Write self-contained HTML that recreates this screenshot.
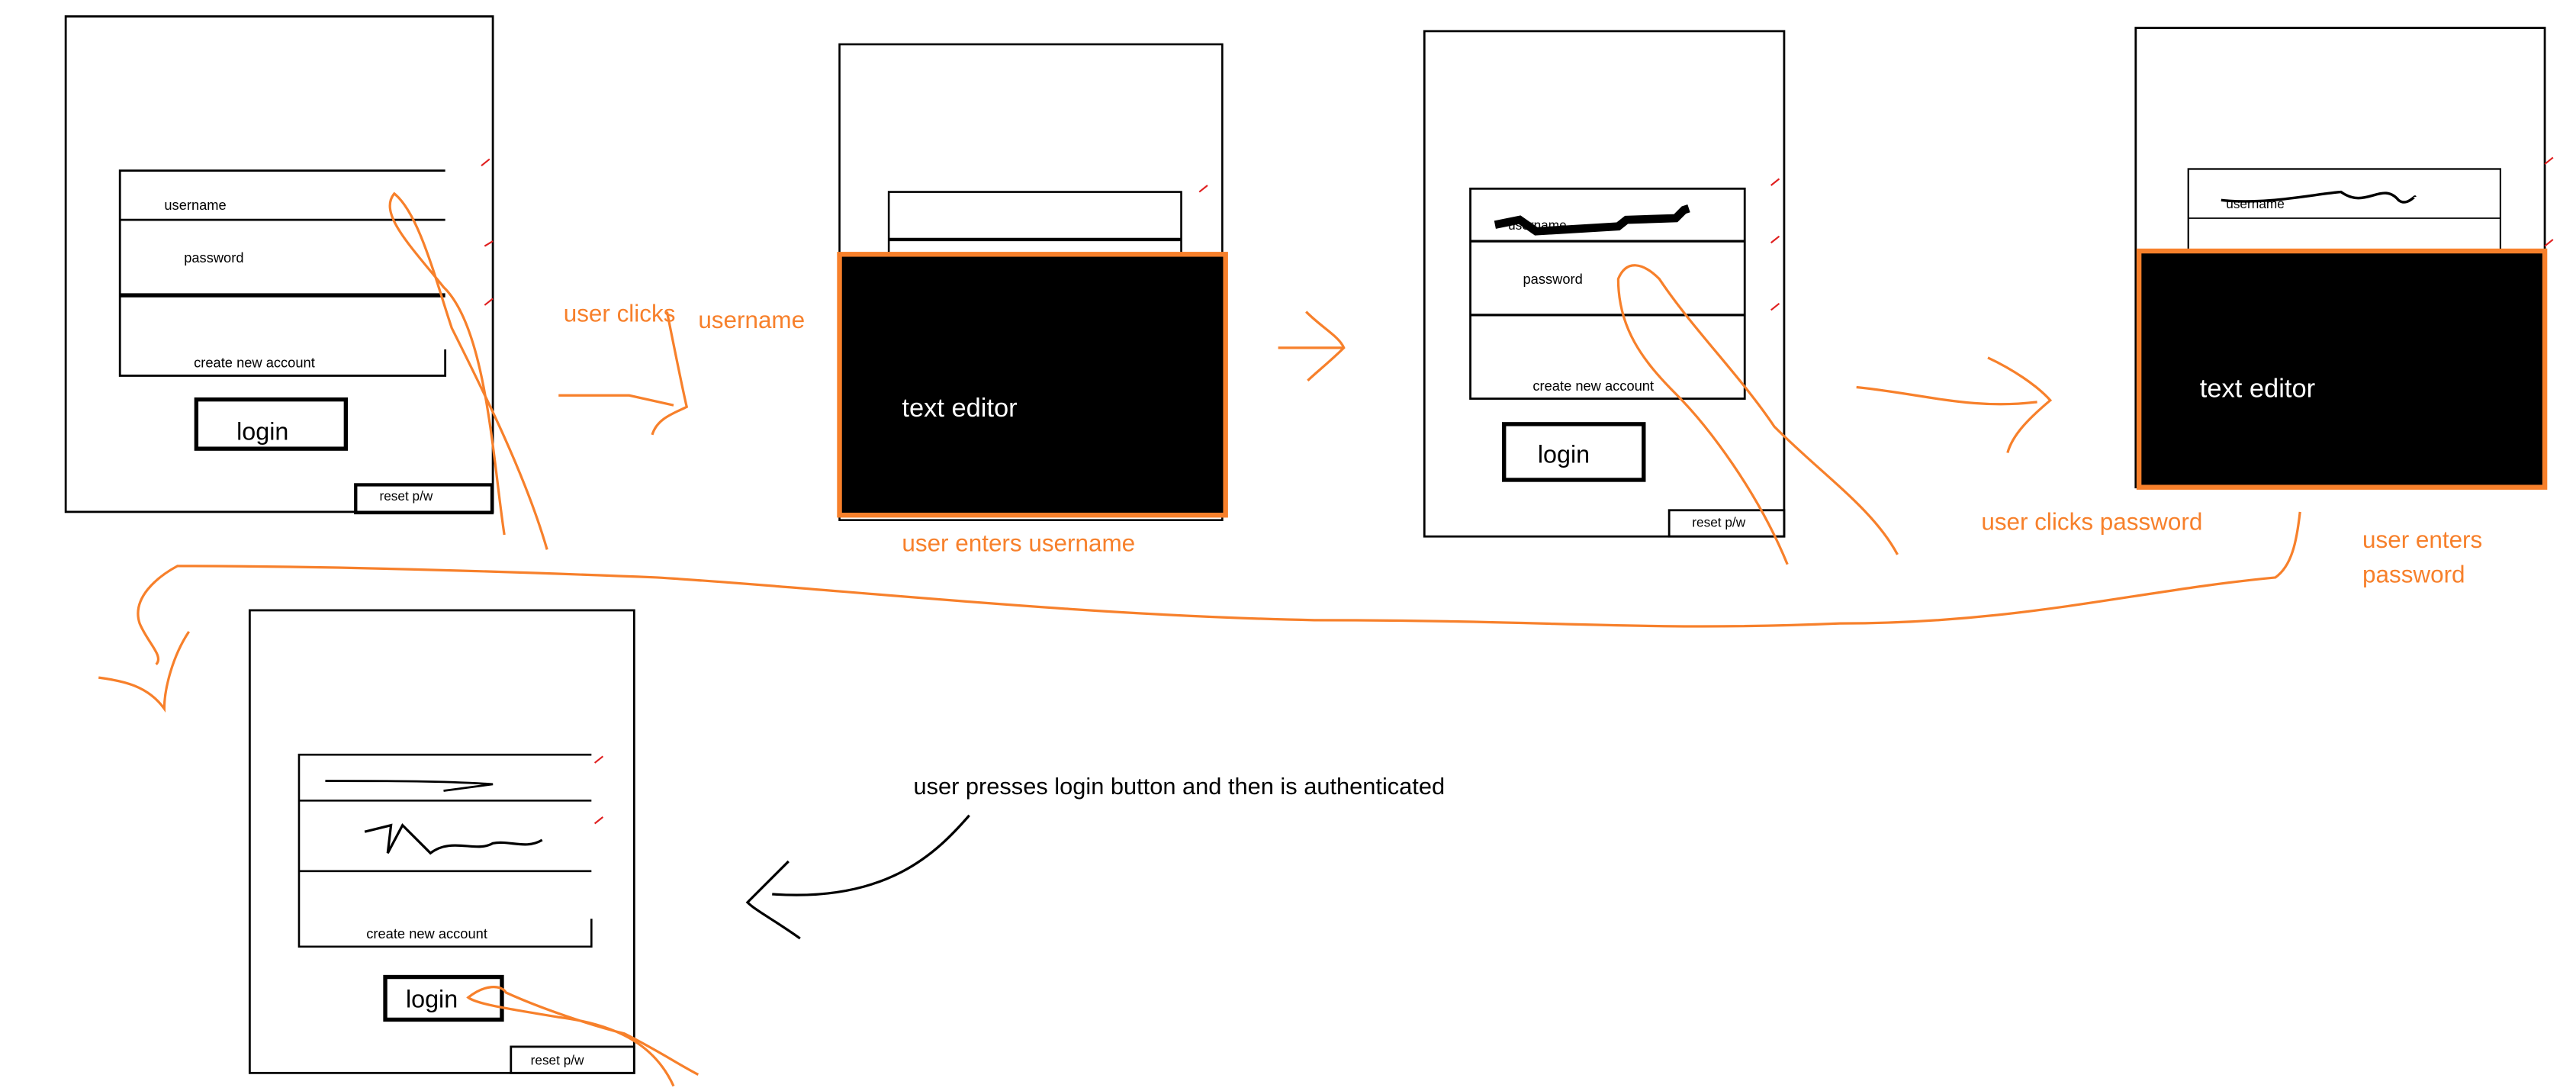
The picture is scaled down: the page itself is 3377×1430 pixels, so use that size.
<!DOCTYPE html>
<html><head><meta charset="utf-8">
<style>
html,body{margin:0;padding:0;background:#fff;}
svg{display:block;}
text{font-family:"Liberation Sans",sans-serif;}
</style></head>
<body>
<svg width="3377" height="1430" viewBox="0 0 1568 665" preserveAspectRatio="none" xmlns="http://www.w3.org/2000/svg">
<rect x="0" y="0" width="1568" height="665" fill="#fff"/>
<g fill="none" stroke="#000">
<rect x="40" y="10" width="260" height="302" stroke-width="1.3"/>
<path d="M271,104 H73 V229 H271 V213" stroke-width="1.3"/>
<line x1="73" y1="134" x2="271" y2="134" stroke-width="1.3"/>
<line x1="73" y1="180" x2="271" y2="180" stroke-width="2.5"/>
<rect x="119.5" y="243.5" width="91" height="30" stroke-width="2.5"/>
<rect x="216.5" y="295.5" width="83" height="17" stroke-width="2"/>
<rect x="511" y="27" width="233" height="290" stroke-width="1.2"/>
<path d="M541,154 V117 H719 V154" stroke-width="1.2"/>
<line x1="541" y1="146" x2="719" y2="146" stroke-width="2"/>
<rect x="867" y="19" width="219" height="308" stroke-width="1.3"/>
<rect x="895" y="115" width="167" height="128" stroke-width="1.3"/>
<line x1="895" y1="147" x2="1062" y2="147" stroke-width="1.5"/>
<line x1="895" y1="192" x2="1062" y2="192" stroke-width="1.5"/>
<rect x="915.5" y="258.5" width="85" height="34" stroke-width="2.5"/>
<rect x="1016" y="311" width="70" height="16" stroke-width="1.3"/>
<rect x="1300" y="17" width="249" height="280" stroke-width="1.3"/>
<path d="M1332,152 V103 H1522 V152" stroke-width="1"/>
<line x1="1332" y1="133" x2="1522" y2="133" stroke-width="0.8"/>
<rect x="152" y="372" width="234" height="282" stroke-width="1.3"/>
<path d="M360,460 H182 V577 H360 V560" stroke-width="1.2"/>
<line x1="182" y1="488" x2="360" y2="488" stroke-width="1.2"/>
<line x1="182" y1="531" x2="360" y2="531" stroke-width="1.2"/>
<rect x="234.5" y="595.5" width="71" height="26" stroke-width="2.5"/>
<rect x="311" y="638" width="75" height="16" stroke-width="1.3"/>
<path d="M910,137 L925,134 L935,141 L985,138 L990,134 L1020,133 L1025,128 L1028,127" stroke-width="5"/>
<path d="M1352,122 C1380,125 1410,118 1425,117 C1440,128 1450,110 1460,122 C1465,126 1470,119 1470,120" stroke-width="1.6"/>
<path d="M198,476 C240,476 270,476 300,478 L270,482" stroke-width="1.3"/>
<path d="M222,507 L238,503 L236,520 L245,503 L262,520 C275,510 290,520 300,514 C310,512 320,518 330,512" stroke-width="1.5"/>
<path d="M590,497 C570,520 540,550 470,545 M487,572 C470,560 460,555 455,550 C465,540 475,530 480,525" stroke-width="1.5"/>
</g>
<rect x="511" y="155" width="235" height="159" fill="#000" stroke="#f7802b" stroke-width="3"/>
<rect x="1302" y="153" width="247" height="144" fill="#000" stroke="#f7802b" stroke-width="3"/>
<g fill="#000">
<text x="100" y="128" font-size="8.5">username</text>
<text x="112" y="160" font-size="8.5">password</text>
<text x="118" y="224" font-size="8.5">create new account</text>
<text x="144" y="268" font-size="15">login</text>
<text x="231" y="305" font-size="8">reset p/w</text>
<text x="918" y="140" font-size="8">username</text>
<text x="927" y="173" font-size="8.5">password</text>
<text x="933" y="238" font-size="8.5">create new account</text>
<text x="936" y="282" font-size="15">login</text>
<text x="1030" y="321" font-size="8">reset p/w</text>
<text x="1355" y="127" font-size="8">username</text>
<text x="223" y="572" font-size="8.5">create new account</text>
<text x="247" y="614" font-size="15">login</text>
<text x="323" y="649" font-size="8">reset p/w</text>
<text x="556" y="484" font-size="14.3">user presses login button and then is authenticated</text>
</g>
<g fill="#fff">
<text x="549" y="254" font-size="16">text editor</text>
<text x="1339" y="242" font-size="16">text editor</text>
</g>
<g fill="#f7802b" font-size="14.6">
<text x="343" y="196">user clicks</text>
<text x="425" y="200">username</text>
<text x="549" y="336">user enters username</text>
<text x="1206" y="323">user clicks password</text>
<text x="1438" y="334">user enters</text>
<text x="1438" y="355">password</text>
</g>
<g fill="none" stroke="#f7802b" stroke-width="1.5">
<path d="M307,326 C300,280 296,200 270,175 C250,150 230,130 240,118 C255,130 265,170 275,200 C295,240 320,290 333,335"/>
<path d="M340,241 L383,241 L410,247 M397,265 C400,255 410,252 418,248 C415,235 410,210 406,190"/>
<path d="M1088,344 C1070,300 1040,260 1020,240 C1000,220 985,200 985,170 C990,158 1000,160 1010,170 C1030,200 1060,230 1080,260 C1110,290 1140,310 1155,338"/>
<path d="M778,212 L818,212 M795,190 C805,200 815,205 818,212 C810,220 800,228 796,232"/>
<path d="M1130,236 C1170,240 1200,250 1240,245 M1210,218 C1225,225 1240,235 1248,244 C1235,255 1225,265 1222,276"/>
<path d="M1400,312 C1398,330 1395,345 1385,352 C1300,360 1230,380 1120,380 C1000,385 950,378 800,378 C650,375 500,358 400,352 C300,348 200,345 108,345 C95,352 80,365 85,380 C90,392 100,400 95,405 M60,413 C75,415 90,418 100,432 C100,420 105,400 115,385"/>
<path d="M410,662 C400,640 380,625 340,620 C310,615 290,612 285,608 C295,600 305,600 308,605 C330,615 360,625 380,630 C400,640 415,650 425,655"/>
</g>
<g stroke="#e02020" stroke-width="1">
<path d="M293,101 L298,97 M295,150 L300,147 M295,186 L300,182 M730,117 L735,113 M1078,113 L1083,109 M1078,148 L1083,144 M1078,189 L1083,185 M1549,100 L1554,96 M1549,150 L1554,146 M362,465 L367,461 M362,502 L367,498"/>
</g>
</svg>
</body></html>
